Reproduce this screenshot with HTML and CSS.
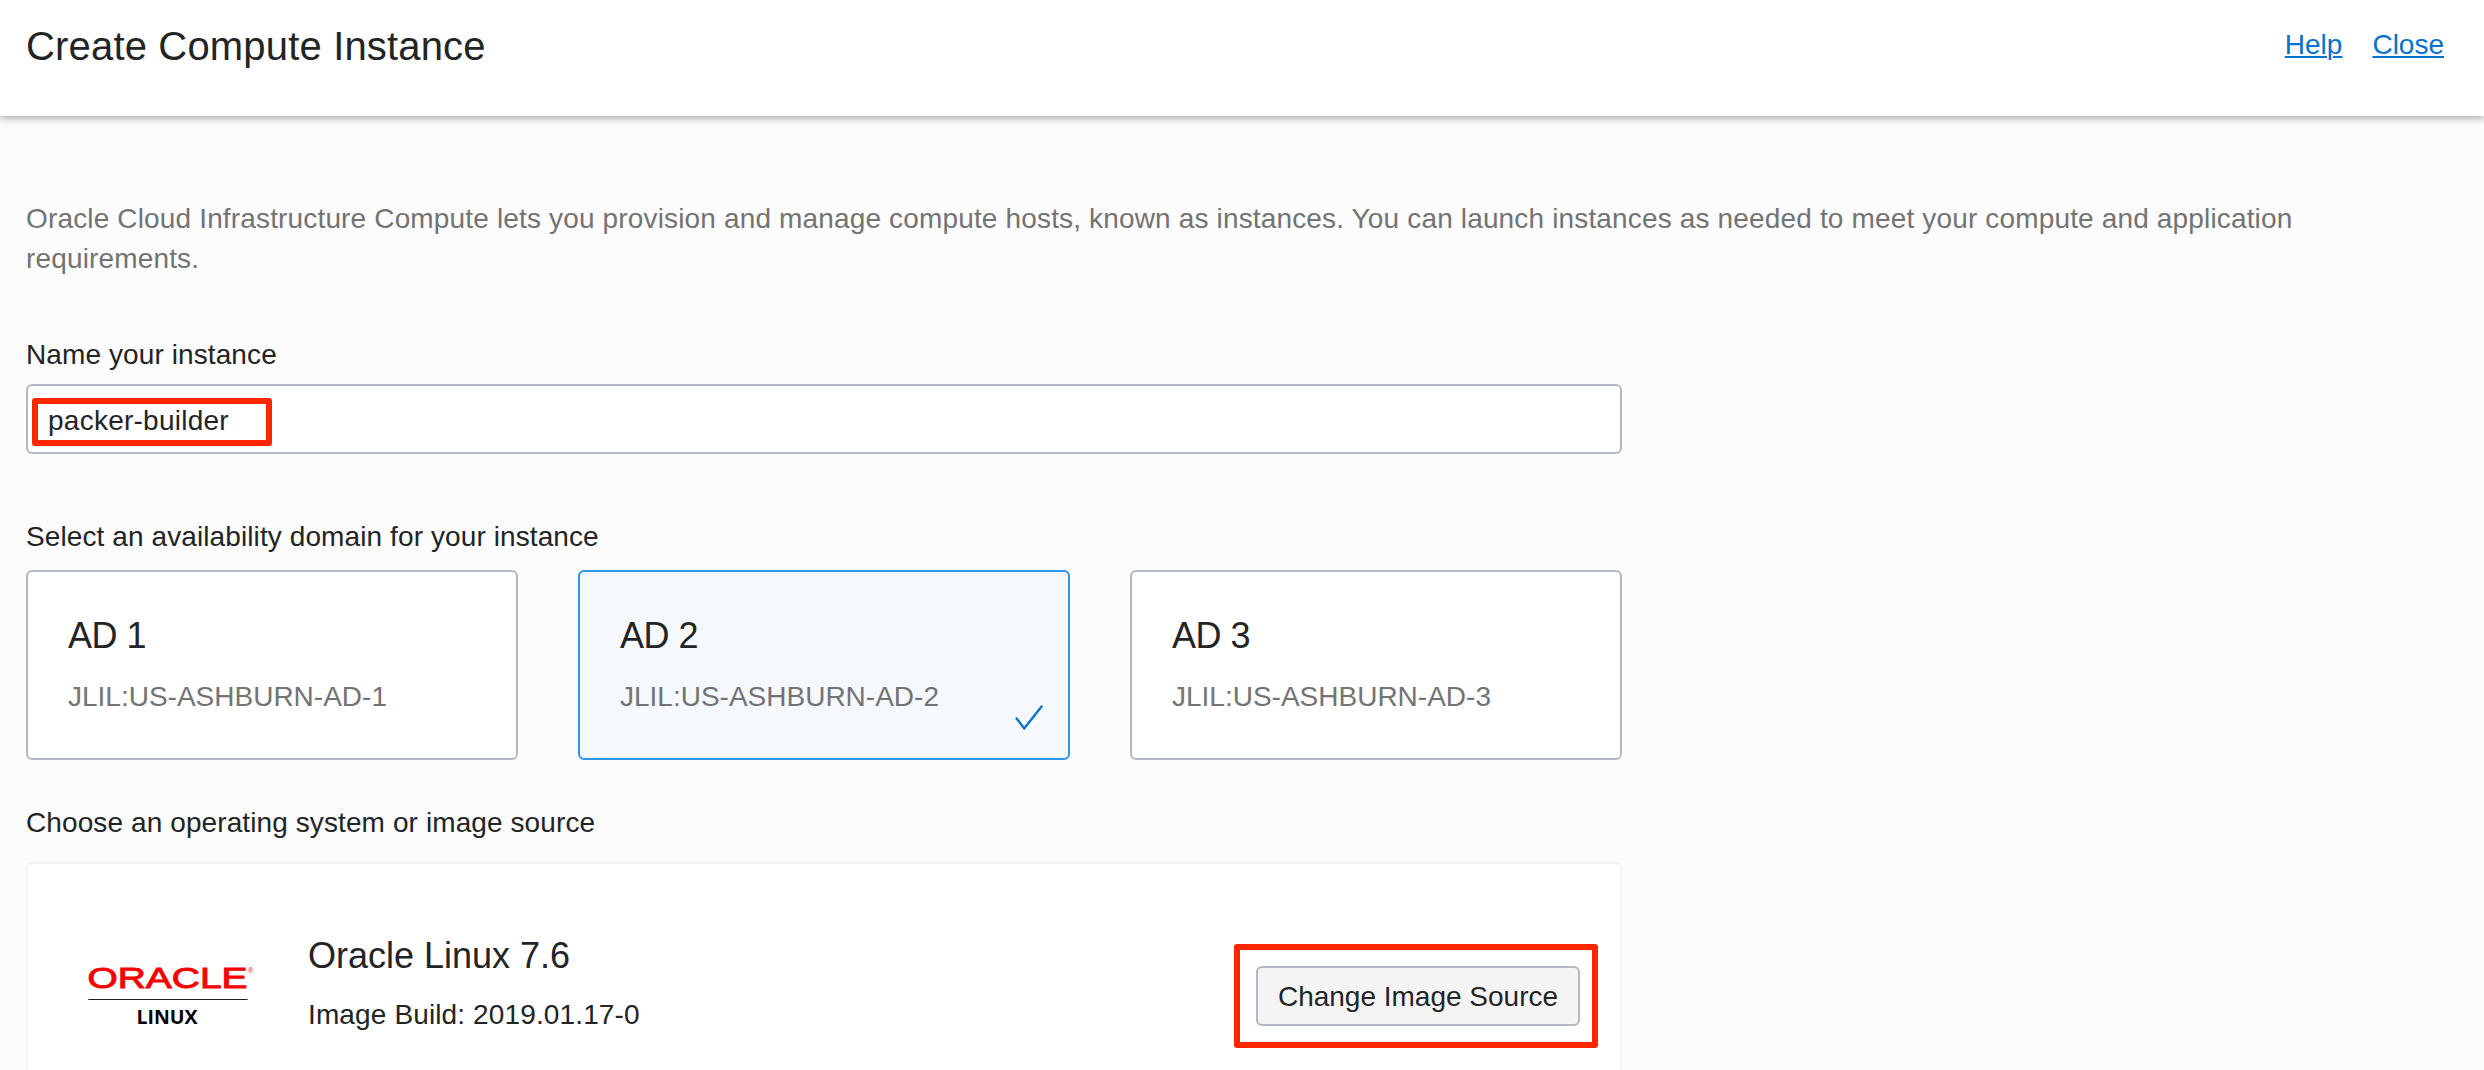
FILE: index.html
```html
<!DOCTYPE html>
<html lang="en">
<head>
<meta charset="utf-8">
<title>Create Compute Instance</title>
<link rel="stylesheet" href="styles.css">
</head>
<body>
<header class="header">
  <h1 class="title">Create Compute Instance</h1>
  <nav class="links"><a class="link" href="#">Help</a><a class="link" href="#">Close</a></nav>
</header>
<main class="content">
  <p class="intro">Oracle Cloud Infrastructure Compute lets you provision and manage compute hosts, known as instances. You can launch instances as needed to meet your compute and application requirements.</p>

  <section class="name-section">
    <label class="label">Name your instance</label>
    <div class="field">packer-builder<span class="mark mark-name"></span></div>
  </section>

  <section class="domain-section">
    <h2 class="label">Select an availability domain for your instance</h2>
    <div class="domains">
      <div class="card"><div class="card-title">AD 1</div><div class="card-sub">JLIL:US-ASHBURN-AD-1</div></div>
      <div class="card selected"><div class="card-title">AD 2</div><div class="card-sub">JLIL:US-ASHBURN-AD-2</div>
        <svg class="check" viewBox="0 0 30 26"><path d="M2.6 14.4 L10.2 24.4 L27.6 2.4"/></svg>
      </div>
      <div class="card"><div class="card-title">AD 3</div><div class="card-sub">JLIL:US-ASHBURN-AD-3</div></div>
    </div>
  </section>

  <section class="source-section">
    <h2 class="label">Choose an operating system or image source</h2>
    <div class="panel">
      <svg class="logo" viewBox="0 0 166 62">
        <text class="logo-oracle" x="-0.5" y="22.2" textLength="160" lengthAdjust="spacingAndGlyphs">ORACLE</text>
        <text class="logo-reg" x="160" y="7">®</text>
        <path class="logo-rule" d="M0.3 33.5H159.6"/>
        <text class="logo-linux" x="48.5" y="58" textLength="61" lengthAdjust="spacingAndGlyphs">LINUX</text>
      </svg>
      <div class="image-info">
        <div class="image-name">Oracle Linux 7.6</div>
        <div class="image-build">Image Build: 2019.01.17-0</div>
      </div>
      <div class="action"><button class="button" type="button">Change Image Source</button><span class="mark mark-button"></span></div>
    </div>
  </section>
</main>
</body>
</html>
```
FILE: styles.css
```css
* { box-sizing: border-box; }
html { overflow: hidden; }
body {
  margin: 0;
  height: 1070px;
  overflow: hidden;
  background: #fcfcfc;
  color: #222425;
  font: 28px/40px "Liberation Sans", Arial, sans-serif;
}
h1, h2, p { margin: 0; font-weight: 400; }

.header {
  position: relative;
  display: flex;
  justify-content: space-between;
  height: 116px;
  padding: 22px 40px 0 26px;
  background: #fff;
  box-shadow: 0 2px 8px rgba(0, 0, 0, .36);
}
.title { font-size: 40px; line-height: 48px; letter-spacing: .17px; }
.links { display: flex; gap: 30px; padding-top: 3px; }
.link {
  color: #0572ce;
  text-decoration: underline;
  text-decoration-thickness: 2px;
  text-underline-offset: 2px;
}

.content { padding: 83px 26px 0; }
.intro { width: 2340px; color: #737373; letter-spacing: .155px; }

.label { display: block; font-size: 28px; line-height: 40px; letter-spacing: .1px; }
.name-section { width: 1596px; margin-top: 56px; }
.field {
  position: relative;
  height: 70px;
  margin-top: 9px;
  padding: 15px 20px 0;
  border: 2px solid #b3b9c4;
  border-radius: 6px;
  background: #fff;
  letter-spacing: .25px;
}
.mark { position: absolute; border: 6px solid #ff2600; border-radius: 3px; }
.mark-name { left: 4px; top: 12px; width: 240px; height: 48px; }

.domain-section { width: 1596px; margin-top: 63px; }
.domains { display: grid; grid-template-columns: repeat(3, 1fr); gap: 60px; margin-top: 13px; }
.card {
  position: relative;
  height: 190px;
  padding: 42px 40px 0;
  border: 2px solid #b3b9c4;
  border-radius: 6px;
  background: #fff;
}
.card.selected { border-color: #2f95ee; background: #f5f9fe; }
.card-title { font-size: 36px; line-height: 44px; letter-spacing: -.5px; }
.card-sub { margin-top: 19px; color: #737373; }
.check { position: absolute; right: 24px; bottom: 28px; width: 30px; height: 26px; }
.check path { fill: none; stroke: #0572ce; stroke-width: 2.4; stroke-linecap: round; }

.source-section { width: 1596px; margin-top: 43px; }
.panel {
  display: flex;
  align-items: flex-start;
  height: 240px;
  margin-top: 19px;
  padding: 0 40px 0 60px;
  border: 2px solid #f3f3f3;
  border-radius: 6px;
  background: #fff;
}
.logo { width: 166px; height: 62px; margin-top: 102px; overflow: visible; }
.logo-oracle { fill: #f80000; font: 29px "Liberation Sans", Arial, sans-serif; stroke: #f80000; stroke-width: .9; }
.logo-reg { fill: #f80000; font: 7px "Liberation Sans", Arial, sans-serif; }
.logo-rule { stroke: #222; stroke-width: 1.2; }
.logo-linux { fill: #000; font: 700 19px "Open Sans", sans-serif; }
.image-info { flex: 1; margin: 70px 0 0 54px; }
.image-name { font-size: 36px; line-height: 44px; }
.image-build { margin-top: 17px; letter-spacing: .13px; }
.action { position: relative; margin-top: 102px; }
.button {
  display: block;
  width: 324px;
  height: 60px;
  padding: 1px 0 0;
  border: 2px solid #b3b9c4;
  border-radius: 6px;
  background: #f4f4f4;
  color: inherit;
  font: inherit;
}
.mark-button { left: -22px; top: -22px; width: 364px; height: 104px; }
```
